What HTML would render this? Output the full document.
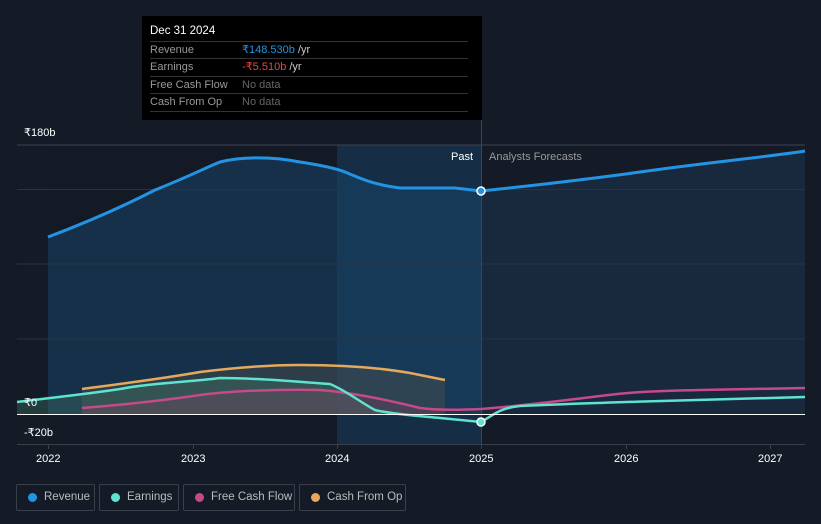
<!DOCTYPE html>
<html><head><meta charset="utf-8"><style>
html,body{margin:0;width:821px;height:524px;overflow:hidden}
body{background:#151b26;font-family:"Liberation Sans","Noto Sans CJK SC",sans-serif;position:relative}
svg{position:absolute;left:0;top:0}
.tt{position:absolute;left:142px;top:16px;width:340px;height:104px;background:#000;color:#fff;font-size:11px}
.tt .h{position:absolute;left:8px;top:9px;font-size:11.5px}
.row{position:absolute;left:8px;width:318px;height:17px;border-top:1px solid #333;line-height:17px;color:#999;white-space:nowrap}
.row span{position:absolute;left:92px}
.leg{position:absolute;top:484px;height:27px;border:1px solid #3a404b;border-radius:2px;color:#bbb;font-size:11.5px;line-height:25px;box-sizing:border-box;white-space:nowrap}
.leg i{position:absolute;left:11px;top:8px;width:9px;height:9px;border-radius:50%}
.leg b{font-weight:normal;position:absolute;left:27px}
</style></head><body>
<svg width="821" height="524">
<rect x="48" y="145" width="289" height="299" fill="#141a25"/>
<rect x="337" y="145" width="144" height="299" fill="#152d45"/>
<path d="M48,237 C85,223 120,208 155,190 C190,176 205,168 220,162 C240,157 270,156 300,162 C320,165 335,168 345,172 C360,178 370,184 400,188 L455,188 L481,191 L481,414 L48,414Z" fill="#1a4468" opacity="0.55"/>
<path d="M481,191 C530,186 580,180 626,174 C700,163 760,158 805,151 L805,414 L481,414Z" fill="#1a2b40" opacity="0.9"/>
<g stroke="#2a3342" stroke-width="1"><line x1="17" y1="145" x2="805" y2="145" stroke="#3a4250"/><line x1="17" y1="189.5" x2="805" y2="189.5"/><line x1="17" y1="264" x2="805" y2="264"/><line x1="17" y1="339" x2="805" y2="339"/></g>
<line x1="481.5" y1="120" x2="481.5" y2="444" stroke="#2e4a66"/>
<line x1="17" y1="444.5" x2="805" y2="444.5" stroke="#3a404b"/>
<g stroke="#3a404b"><line x1="48.5" y1="444" x2="48.5" y2="449"/><line x1="193.5" y1="444" x2="193.5" y2="449"/><line x1="337.5" y1="444" x2="337.5" y2="449"/><line x1="481.5" y1="444" x2="481.5" y2="449"/><line x1="626.5" y1="444" x2="626.5" y2="449"/><line x1="770.5" y1="444" x2="770.5" y2="449"/></g>
<path d="M82,389 C120,384 160,379 200,372 C240,367 270,365 300,365 C330,365 370,366 410,373 L445,380 L445,414 L82,414Z" fill="#5a5a48" opacity="0.35"/>
<path d="M17,402 C48,398 80,395 120,389 C150,383 190,382 220,378 C260,378 300,382 330,384 C345,390 360,402 375,410 L400,414 L17,414Z" fill="#3f7a6a" opacity="0.35"/>
<path d="M82,408 C120,405 160,401 200,395 C230,391 280,389 320,390 C345,392 380,398 420,408 L440,410 L440,414 L82,414Z" fill="#804060" opacity="0.3"/>
<path d="M82,389 C120,384 160,379 200,372 C240,367 270,365 300,365 C330,365 370,366 410,373 L445,380" fill="none" stroke="#e4a95c" stroke-width="2.5"/>
<path d="M82,408 C120,405 160,401 200,395 C230,391 280,389 320,390 C345,392 380,398 420,408 C435,410 460,410 481,409 C520,406 560,401 600,396 C630,392 655,391 700,390 L805,388" fill="none" stroke="#c64a87" stroke-width="2.5"/>
<path d="M17,402 C48,398 80,395 120,389 C150,383 190,382 220,378 C260,378 300,382 330,384 C345,390 360,402 375,410 C390,414 420,416 440,418 L481,422 C495,414 500,408 520,406 C560,404 600,403 626,402 L805,397" fill="none" stroke="#5ee3cf" stroke-width="2.5"/>
<line x1="17" y1="414.5" x2="805" y2="414.5" stroke="#fff" stroke-width="1"/>
<path d="M48,237 C85,223 120,208 155,190 C190,176 205,168 220,162 C240,157 270,156 300,162 C320,165 335,168 345,172 C360,178 370,184 400,188 L455,188 L481,191 C530,186 580,180 626,174 C700,163 760,158 805,151" fill="none" stroke="#2394e4" stroke-width="3"/>
<circle cx="481" cy="191" r="4" fill="#2394e4" stroke="#fff" stroke-width="1.5"/>
<circle cx="481" cy="422" r="4" fill="#5ee3cf" stroke="#fff" stroke-width="1.5"/>
<g fill="#fff" font-size="11" font-family="Liberation Sans,sans-serif">
<text x="24" y="136">₹180b</text><text x="24" y="406">₹0</text><text x="24" y="436">-₹20b</text>
<text x="451" y="160">Past</text><text x="489" y="160" fill="#999">Analysts Forecasts</text>
<text x="36" y="462">2022</text><text x="181" y="462">2023</text><text x="325" y="462">2024</text><text x="469" y="462">2025</text><text x="614" y="462">2026</text><text x="758" y="462">2027</text>
</g>
</svg>
<div class="tt"><div class="h">Dec 31 2024</div>
<div class="row" style="top:25px">Revenue<span><span style="position:static;color:#2394e4">₹148.530b</span> <span style="position:static;color:#ccc">/yr</span></span></div>
<div class="row" style="top:42px">Earnings<span><span style="position:static;color:#e84545">-₹5.510b</span> <span style="position:static;color:#ccc">/yr</span></span></div>
<div class="row" style="top:60px">Free Cash Flow<span style="color:#666">No data</span></div>
<div class="row" style="top:77px">Cash From Op<span style="color:#666">No data</span></div>
<div class="row" style="top:95px;height:0"></div>
</div>
<div class="leg" style="left:16px;width:79px"><i style="background:#2394e4"></i><b>Revenue</b></div>
<div class="leg" style="left:99px;width:80px"><i style="background:#5ee3cf"></i><b>Earnings</b></div>
<div class="leg" style="left:183px;width:112px"><i style="background:#c64a87"></i><b>Free Cash Flow</b></div>
<div class="leg" style="left:299px;width:107px"><i style="background:#e4a95c"></i><b>Cash From Op</b></div>
</body></html>
